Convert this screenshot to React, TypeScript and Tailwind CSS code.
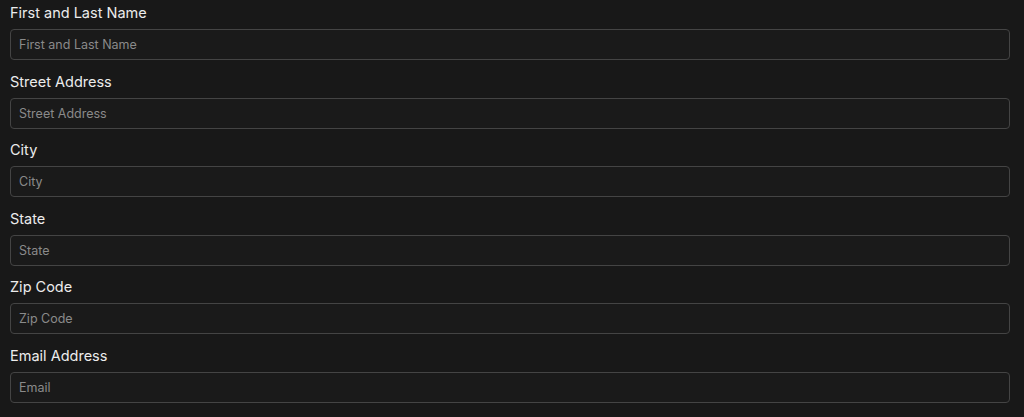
const fields = [
  { label: 'First and Last Name', placeholder: 'First and Last Name' },
  { label: 'Street Address', placeholder: 'Street Address' },
  { label: 'City', placeholder: 'City' },
  { label: 'State', placeholder: 'State' },
  { label: 'Zip Code', placeholder: 'Zip Code' },
  { label: 'Email Address', placeholder: 'Email' },
]

export default function App() {
  return (
    <div className="min-h-screen bg-[#181818] px-[10px] pt-[3px] font-['Inter',sans-serif]">
      <div className="w-[1000px] flex flex-col">
        {fields.map((f) => (
          <div key={f.label} className="flex flex-col h-[68.6px]">
            <label className="text-[14.5px] leading-[20px] text-[#ececec] mb-[6px]">{f.label}</label>
            <input
              type="text"
              placeholder={f.placeholder}
              className="h-[31px] w-full rounded-[4px] border border-[#444444] bg-[#1a1a1a] px-[8px] text-[12.5px] text-[#ececec] placeholder:text-[#8a8a8a] outline-none"
            />
          </div>
        ))}
      </div>
    </div>
  )
}
